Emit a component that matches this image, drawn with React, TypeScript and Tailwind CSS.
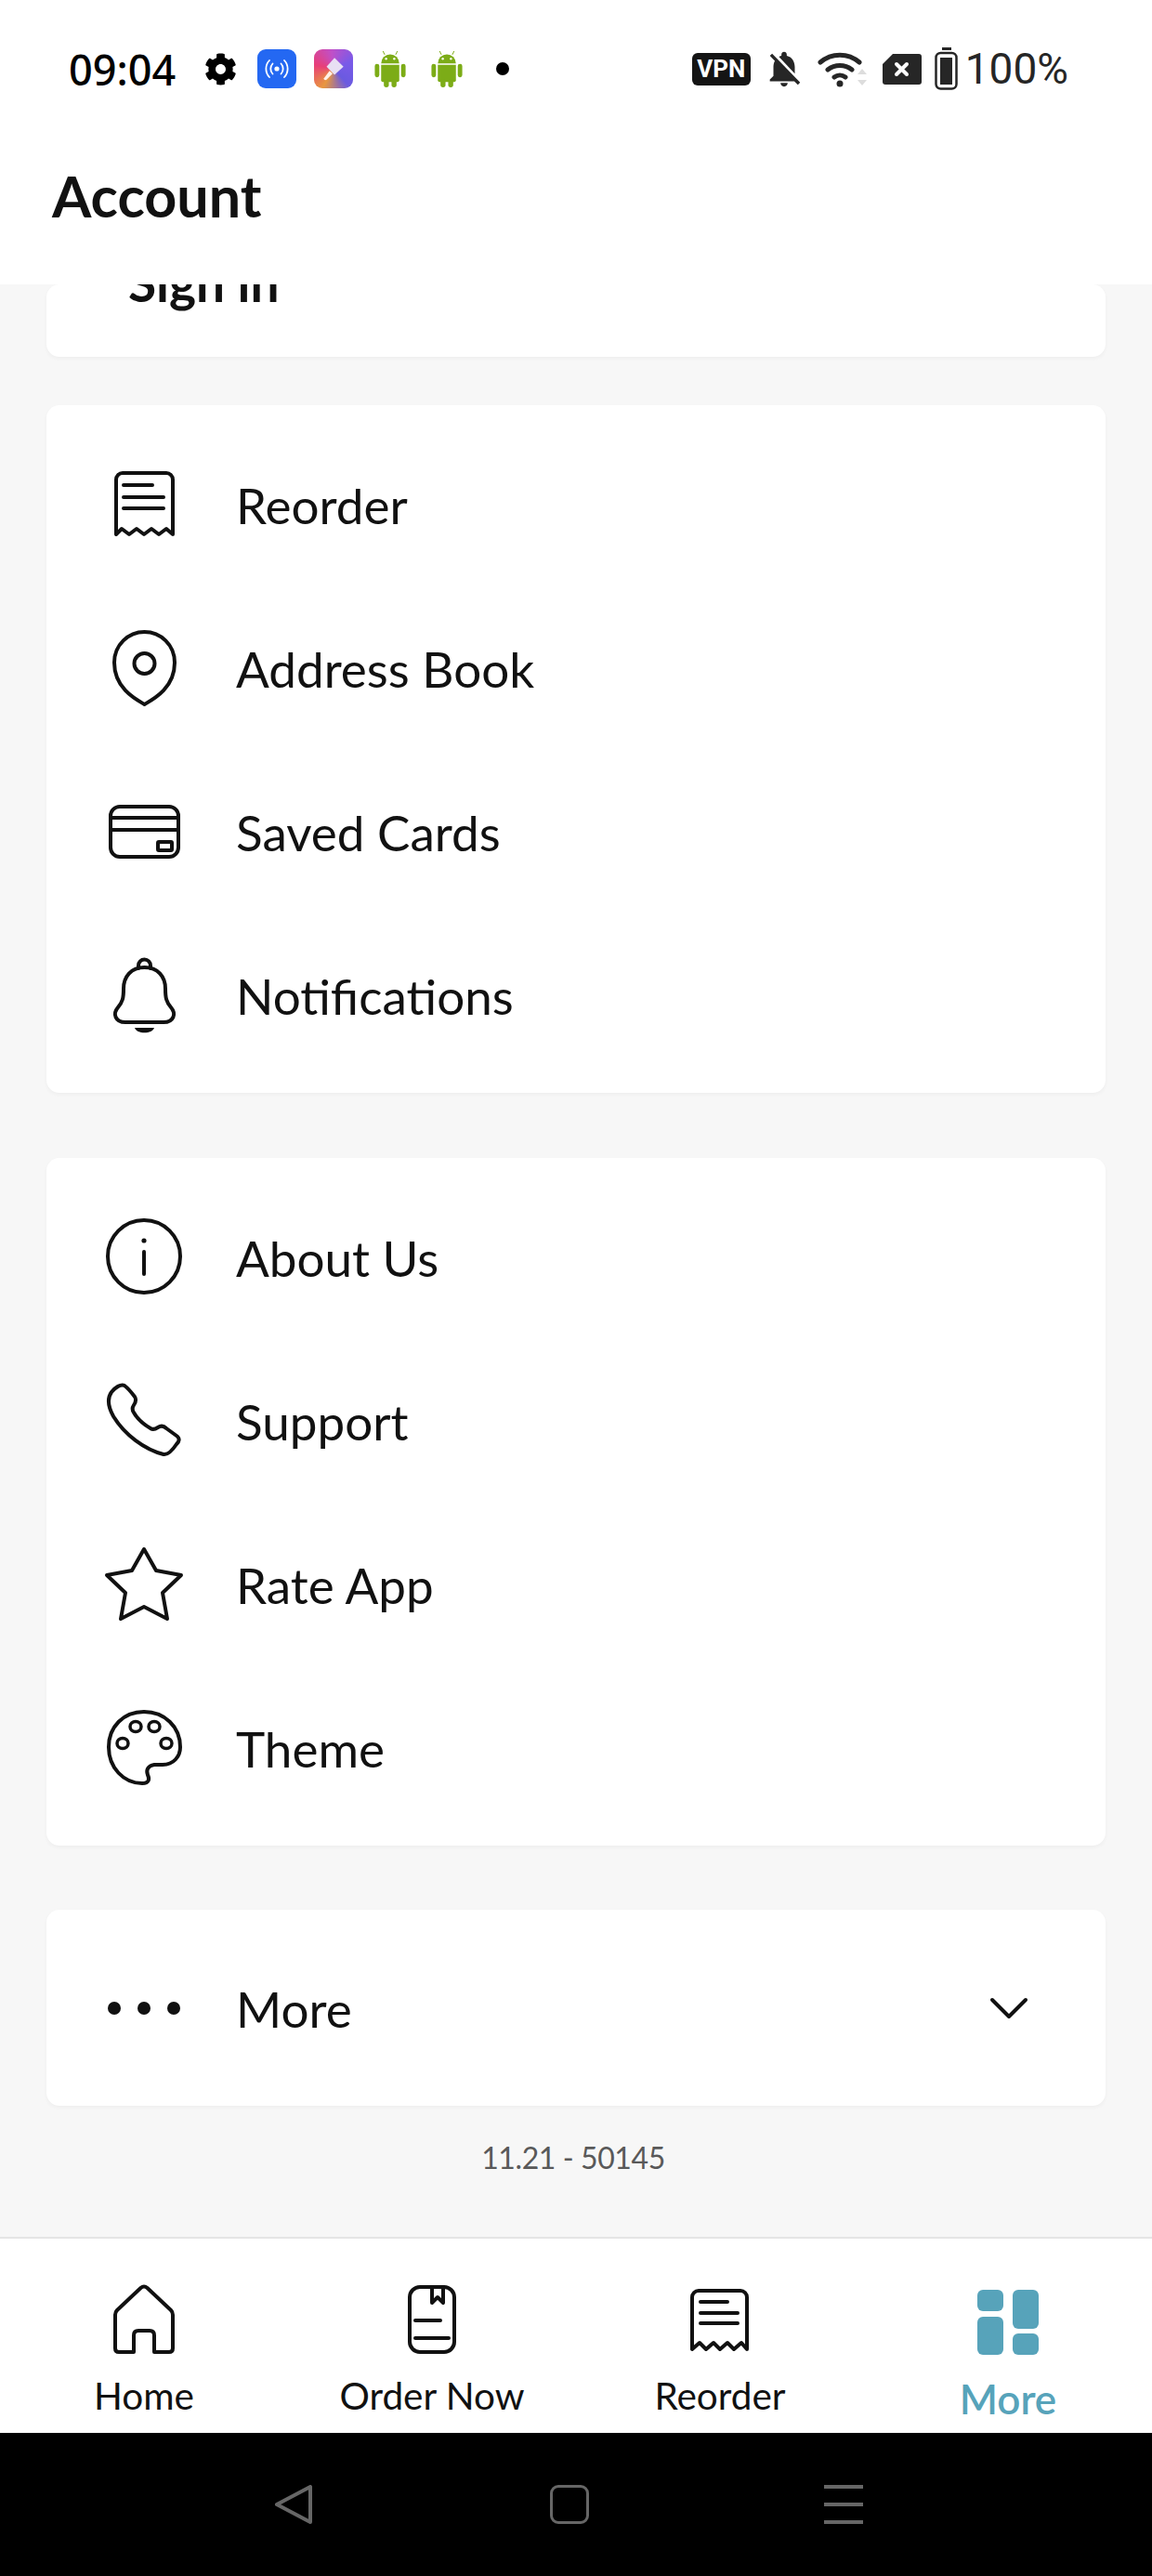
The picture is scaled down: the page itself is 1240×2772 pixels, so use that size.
import type { ReactNode } from "react";
import { FaCog } from "react-icons/fa";
import { MdNotificationsOff } from "react-icons/md";

const lineProps = {
  fill: "none",
  stroke: "#111111",
  strokeWidth: 4,
  strokeLinecap: "round" as const,
  strokeLinejoin: "round" as const,
};

function Icon({ children }: { children: ReactNode }) {
  return (
    <svg viewBox="0 0 88 88" className="h-[88px] w-[88px] shrink-0" {...lineProps}>
      {children}
    </svg>
  );
}

function AndroidBot({ className }: { className: string }) {
  return (
    <svg viewBox="0 0 34 40" className={`h-[39px] w-[34px] ${className}`} fill="#7cac17">
      <path d="M11 4L9 0M23 4l2-4" stroke="#7cac17" strokeWidth="1" />
      <path d="M7 13.500a10 10 0 0 1 20 0z" />
      <circle cx="12.500" cy="8.500" r="1.200" fill="white" />
      <circle cx="21.500" cy="8.500" r="1.200" fill="white" />
      <path d="M7 15h20v17a2 2 0 0 1-2 2H9a2 2 0 0 1-2-2z" />
      <rect x="0" y="14" width="5" height="15" rx="2.500" />
      <rect x="29" y="14" width="5" height="15" rx="2.500" />
      <rect x="10" y="31" width="5.500" height="9" rx="2.700" />
      <rect x="18.500" y="31" width="5.500" height="9" rx="2.700" />
    </svg>
  );
}

const receiptIcon = (
  <Icon>
    <path d="M14 77V18a7 7 0 0 1 7-7h47a7 7 0 0 1 7 7v59l-7-6-8 6-8-6-8 6-8-6-8 6-8-6z" />
    <path d="M22 24h31M22 37h43M22 49h43" />
  </Icon>
);

const pinIcon = (
  <Icon>
    <path d="M44.5 84C34 78 12 66 12 39 12 20 27 6 44.5 6 62 6 77 20 77 39 77 66 55 78 44.5 84z" />
    <circle cx="44.5" cy="40" r="11" />
  </Icon>
);

const cardIcon = (
  <Icon>
    <rect x="8" y="18" width="73" height="54" rx="10" />
    <path d="M8 30h73M8 43h73" />
    <rect x="59" y="56" width="15" height="9" rx="1" />
  </Icon>
);

const bellIcon = (
  <Icon>
    <path d="M44.5 15C30 15 22 25 22 38c0 10-1 14-6 20-6 7-3 16 8 16h41c11 0 14-9 8-16-5-6-6-10-6-20 0-13-8-23-22.500-23z" />
    <path d="M38 16v-3a6.500 6.500 0 0 1 13 0v3" />
    <path d="M34 80h21c-2 7-19 7-21 0z" fill="#111111" stroke="none" />
  </Icon>
);

const infoIcon = (
  <Icon>
    <circle cx="44" cy="44" r="39" />
    <circle cx="44" cy="27" r="2.600" fill="#111111" stroke="none" />
    <path d="M44 39v24" />
  </Icon>
);

const phoneIcon = (
  <Icon>
    <path d="M9 14c4-5 10-9 14-7 4 3 8 8 11 12 2 3 1 6-1 9-2 3-2 5 0 8 4 7 11 13 18 17 3 2 5 1 8-1 3-2 6-2 9 1l11 8c4 3 3 6 0 9-4 6-9 12-14 11-20-5-42-21-54-41-5-9-7-19-2-26z" />
  </Icon>
);

const starIcon = (
  <Icon>
    <path d="M44 7l13 23 27 5-20 19 5 28-25-13-25 13 5-28L4 35l27-5z" />
  </Icon>
);

const paletteIcon = (
  <Icon>
    <path d="M44 6C22 6 6 22 6 44c0 22 16 39 36 39 8 0 8-5 6-9-2-5 0-10 7-11h9c12 0 19-9 19-19C83 22 66 6 44 6z" />
    <ellipse cx="21" cy="40" rx="6" ry="5.500" strokeWidth="3.500" />
    <ellipse cx="35" cy="22" rx="6" ry="5.500" strokeWidth="3.500" />
    <ellipse cx="55" cy="22" rx="6" ry="5.500" strokeWidth="3.500" />
    <ellipse cx="68" cy="40" rx="6" ry="5.500" strokeWidth="3.500" />
  </Icon>
);

const dotsIcon = (
  <Icon>
    <circle cx="12" cy="44" r="7" fill="#111111" stroke="none" />
    <circle cx="44" cy="44" r="7" fill="#111111" stroke="none" />
    <circle cx="76" cy="44" r="7" fill="#111111" stroke="none" />
  </Icon>
);

const accountRows = [
  { icon: receiptIcon, label: "Reorder" },
  { icon: pinIcon, label: "Address Book" },
  { icon: cardIcon, label: "Saved Cards" },
  { icon: bellIcon, label: "Notifications" },
];

const appRows = [
  { icon: infoIcon, label: "About Us" },
  { icon: phoneIcon, label: "Support" },
  { icon: starIcon, label: "Rate App" },
  { icon: paletteIcon, label: "Theme" },
];

const tabs = [
  {
    label: "Home",
    icon: (
      <Icon>
        <path d="M40.500 10q3.500-3 7 0L73 34q2 2 2 5v36q0 4-4 4H55V61q0-5-5-5H38q-5 0-5 5v18H17q-4 0-4-4V39q0-3 2-5z" />
      </Icon>
    ),
  },
  {
    label: "Order Now",
    icon: (
      <Icon>
        <rect x="20" y="9" width="48" height="70" rx="11" />
        <path d="M44 9v17l6-6 6 6V9M26 45h27M26 64h36" />
      </Icon>
    ),
  },
  {
    label: "Reorder",
    icon: (
      <Icon>
        <path d="M14 76V20a7 7 0 0 1 7-7h45a7 7 0 0 1 7 7v56l-6-7-8 7-7-7-8 7-7-7-8 7-7-7z" />
        <path d="M23 25h29M23 37h40M23 48h40" />
      </Icon>
    ),
  },
];

function MenuRow({ icon, label }: { icon: ReactNode; label: string }) {
  return (
    <div className="flex h-[176px] items-center pl-[61px]">
      {icon}
      <span className="ml-[55px] pt-[3px] text-[53px] text-[#111111]">{label}</span>
    </div>
  );
}

function Card({ children, className }: { children: ReactNode; className: string }) {
  return (
    <div className={`mx-[50px] rounded-[14px] bg-white shadow-[0_2px_4px_rgba(0,0,0,0.04)] ${className}`}>
      {children}
    </div>
  );
}

function StatusBar() {
  return (
    <div className="flex h-[148px] items-center pl-[74px] pr-[90px]">
      <span className="font-['Noto_Sans'] text-[45px] font-medium leading-none text-black">09:04</span>
      <FaCog className="ml-[31px] h-[35px] w-[35px] text-black" />
      <div className="ml-[22px] flex h-[42px] w-[42px] items-center justify-center rounded-[9px] bg-[#2468f2]">
        <svg viewBox="0 0 28 28" className="h-[28px] w-[28px]" fill="none" stroke="white" strokeWidth="1.800" strokeLinecap="round">
          <circle cx="14" cy="14" r="2.600" fill="white" stroke="none" />
          <path d="M9.500 8.500a8 8 0 0 0 0 11M18.500 8.500a8 8 0 0 1 0 11M6 5a13 13 0 0 0 0 18M22 5a13 13 0 0 1 0 18" />
        </svg>
      </div>
      <div className="ml-[19px] flex h-[42px] w-[42px] items-center justify-center rounded-[9px] bg-[conic-gradient(from_210deg,#e8973f,#e83e78,#c050c8,#7a5ae8,#6a5ae0,#e8973f)]">
        <svg viewBox="0 0 28 28" className="h-[30px] w-[30px]">
          <path d="M15 3l9 9-9 8-8-8z" fill="#e8e0f4" />
          <path d="M10 16l3 3-6 6q-2 1-3-1z" fill="#fff2ea" />
        </svg>
      </div>
      <AndroidBot className="ml-[23px]" />
      <AndroidBot className="ml-[27px]" />
      <div className="ml-[36px] h-[14px] w-[14px] rounded-full bg-black" />

      <div className="ml-auto flex h-[35px] w-[63px] items-center justify-center rounded-[6px] bg-[#141414] font-['Roboto'] text-[26px] font-bold text-white">
        VPN
      </div>
      <MdNotificationsOff className="ml-[13px] h-[46px] w-[46px] text-[#262626]" />
      <svg viewBox="0 0 54 42" className="ml-[13px] h-[42px] w-[54px]" fill="none" stroke="#262626" strokeWidth="5" strokeLinecap="round">
        <path d="M3 14a32 32 0 0 1 42 0M11 22a21 21 0 0 1 26 0M18 30a10 10 0 0 1 12 0" />
        <circle cx="24" cy="37" r="3.500" fill="#262626" stroke="none" />
        <path d="M43 27l5-6 5 6zM43 33l5 6 5-6z" fill="#dddddd" stroke="none" />
      </svg>
      <svg viewBox="0 0 42 34" className="ml-[16px] h-[34px] w-[42px]">
        <path d="M11 1h28a3 3 0 0 1 3 3v27a3 3 0 0 1-3 3H3a3 3 0 0 1-3-3V12z" fill="#262626" />
        <path d="M15 12l11 11M26 12L15 23" stroke="white" strokeWidth="4" strokeLinecap="round" />
      </svg>
      <svg viewBox="0 0 26 46" className="ml-[14px] h-[46px] w-[26px]" fill="none" stroke="#262626">
        <path d="M8 1.500h10" strokeWidth="3" />
        <rect x="1.500" y="6" width="22" height="38.500" rx="5" strokeWidth="2.500" />
        <rect x="6" y="11" width="13" height="29" fill="#262626" stroke="none" />
      </svg>
      <span className="ml-[7px] font-['Roboto'] text-[46px] leading-none text-[#262626]">100%</span>
    </div>
  );
}

export default function App() {
  return (
    <div className="flex h-[2772px] w-[1240px] flex-col overflow-hidden bg-white font-['Lato',sans-serif]">
      <header className="h-[306px] shrink-0 bg-white">
        <StatusBar />
        <h1 className="pl-[56px] pt-[28px] text-[61px] font-bold leading-[70px] text-[#111111]">Account</h1>
      </header>

      <main className="flex min-h-0 flex-1 flex-col overflow-hidden bg-[#f7f7f7]">
        <Card className="h-[78px] shrink-0 overflow-hidden">
          <p className="-mt-[34px] pl-[88px] text-[55px] font-bold leading-[64px] text-[#111111]">Sign in</p>
        </Card>

        <Card className="mt-[52px] shrink-0 py-[18px]">
          {accountRows.map((row) => (
            <MenuRow key={row.label} icon={row.icon} label={row.label} />
          ))}
        </Card>

        <Card className="mt-[70px] shrink-0 py-[18px]">
          {appRows.map((row) => (
            <MenuRow key={row.label} icon={row.icon} label={row.label} />
          ))}
        </Card>

        <Card className="mt-[69px] flex h-[211px] shrink-0 items-center pr-[82px]">
          <div className="flex-1">
            <MenuRow icon={dotsIcon} label="More" />
          </div>
          <svg viewBox="0 0 44 26" className="h-[26px] w-[44px]" {...lineProps}>
            <path d="M4 4l18 18L40 4" />
          </svg>
        </Card>

        <p className="mt-[35px] pr-[6px] text-center text-[32px] leading-[42px] tracking-[-0.4px] text-[#595959]">11.21 - 50145</p>
      </main>

      <nav className="grid h-[211px] shrink-0 grid-cols-4 border-t-2 border-[#e5e5e5] bg-white">
        {tabs.map((tab) => (
          <div key={tab.label} className="flex flex-col items-center pt-[43px]">
            {tab.icon}
            <span className="mt-[14px] text-[40.5px] leading-[48px] text-[#111111]">{tab.label}</span>
          </div>
        ))}
        <div className="flex flex-col items-center pt-[43px]">
          <svg viewBox="0 0 88 88" className="h-[88px] w-[88px]" fill="#57a3ba">
            <rect x="11" y="12" width="28" height="23" rx="6" />
            <rect x="11" y="41" width="28" height="41" rx="6" />
            <rect x="49" y="12" width="28" height="42" rx="6" />
            <rect x="49" y="59" width="28" height="23" rx="6" />
          </svg>
          <span className="mt-[15px] text-[44px] font-semibold leading-[52px] text-[#57a3ba]">More</span>
        </div>
      </nav>

      <div className="flex h-[154px] shrink-0 bg-black">
        <div className="flex w-full items-start pt-[56px]">
          <svg viewBox="0 0 42 42" className="ml-[295px] h-[42px] w-[42px]" fill="none" stroke="#666666" strokeWidth="4" strokeLinejoin="round">
            <path d="M39 2v38L3 21z" />
          </svg>
          <div className="ml-[255px] h-[42px] w-[42px] rounded-[9px] border-[3px] border-[#666666]" />
          <div className="ml-[253px] flex h-[42px] w-[42px] flex-col justify-between">
            <div className="h-[4px] bg-[#666666]" />
            <div className="h-[4px] bg-[#666666]" />
            <div className="h-[4px] bg-[#666666]" />
          </div>
        </div>
      </div>
    </div>
  );
}
